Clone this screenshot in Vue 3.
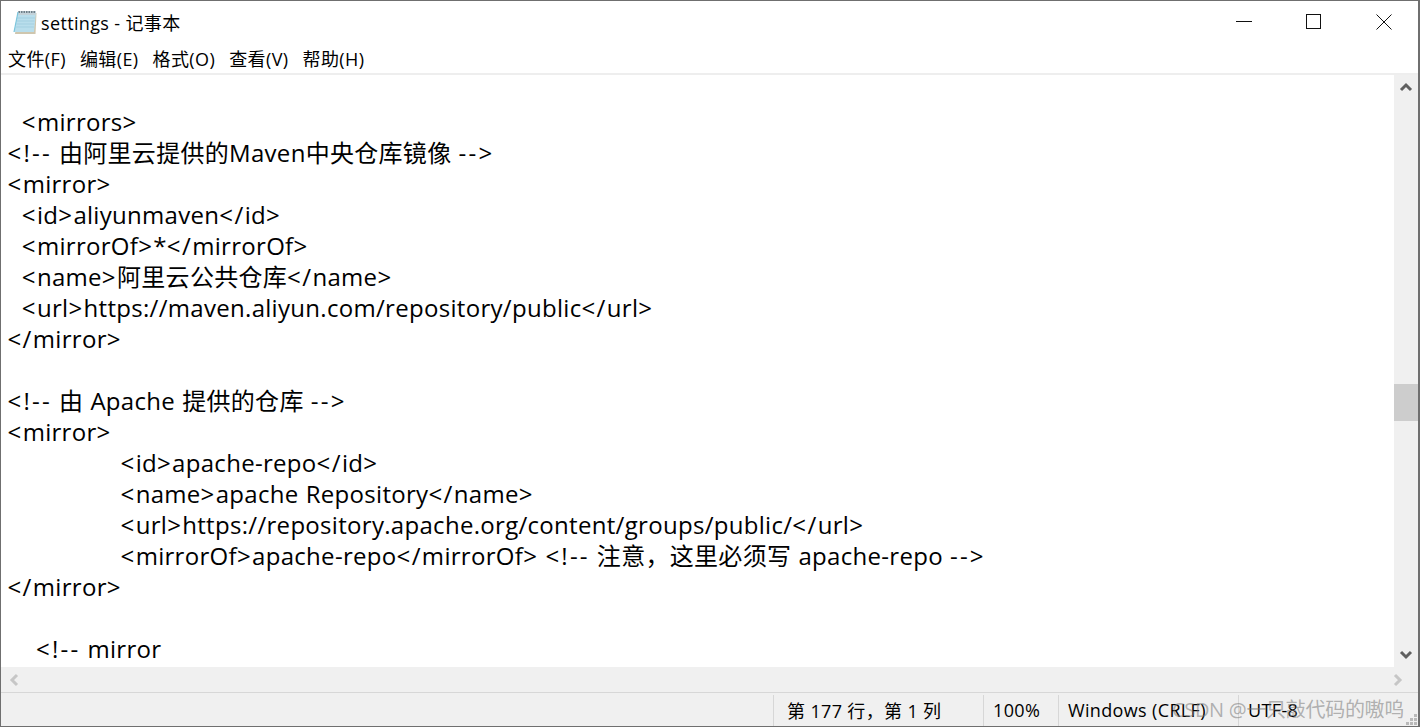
<script setup>
const menus = ['文件(F)', '编辑(E)', '格式(O)', '查看(V)', '帮助(H)']
const source = [
  '',
  '  <mirrors>',
  '<!-- 由阿里云提供的Maven中央仓库镜像 -->',
  '<mirror>',
  '  <id>aliyunmaven</id>',
  '  <mirrorOf>*</mirrorOf>',
  '  <name>阿里云公共仓库</name>',
  '  <url>https://maven.aliyun.com/repository/public</url>',
  '</mirror>',
  '',
  '<!-- 由 Apache 提供的仓库 -->',
  '<mirror>',
  '\t<id>apache-repo</id>',
  '\t<name>apache Repository</name>',
  '\t<url>https://repository.apache.org/content/groups/public/</url>',
  '\t<mirrorOf>apache-repo</mirrorOf> <!-- 注意，这里必须写 apache-repo -->',
  '</mirror>',
  '',
  '    <!-- mirror',
]
// Comment markers and angle brackets are wider in the reference's font.
const lines = source.map((l) =>
  l.split(/(<!--|-->|<\/|<|>)/).filter(Boolean).map((t) => ({
    t,
    cls: t === '<!--' || t === '-->' ? 'mark' : t === '<' || t === '>' || t === '</' ? 'angle' : '',
  }))
)
</script>

<template>
  <div class="window">
    <div class="backdrop"></div>
    <header class="titlebar">
      <svg class="app-icon" viewBox="0 0 24 24" aria-hidden="true">
        <path d="M5 3 H23.5 L22.5 24 H2 Z" fill="#cfc6ae" />
        <path d="M5 2 H23 L21 22 H1 Z" fill="#b9deec" />
        <path d="M5 1 H23 L22.6 5 H4.4 Z" fill="#c3d2d9" />
        <path d="M5.5 2 H22.5" stroke="#6f7f88" stroke-width="2" stroke-dasharray="1.5 1" fill="none" />
        <path d="M4.2 8 H21.8 M3.8 11 H21.5 M3.5 14 H21.2 M3.2 17 H20.9" stroke="#a3cfe0" stroke-width="1" fill="none" />
        <path d="M5 2 L1 22" stroke="#7cc5dc" stroke-width="1.2" fill="none" />
      </svg>
      <span class="title">settings - 记事本</span>
      <div class="controls">
        <svg class="ctl" viewBox="0 0 16 16" aria-hidden="true"><path d="M0 7.5 H16" stroke="#111" fill="none" /></svg>
        <svg class="ctl" viewBox="0 0 16 16" aria-hidden="true"><rect x="0.5" y="0.5" width="14" height="14" stroke="#111" fill="none" /></svg>
        <svg class="ctl" viewBox="0 0 16 16" aria-hidden="true"><path d="M0.5 0.5 L15.5 15.5 M15.5 0.5 L0.5 15.5" stroke="#111" fill="none" /></svg>
      </div>
    </header>
    <nav class="menubar">
      <span v-for="m in menus" :key="m" class="menu">{{ m }}</span>
    </nav>
    <main class="body">
      <div class="editor">
        <div v-for="(l, i) in lines" :key="i" class="line"><span v-for="(p, j) in l" :key="j" :class="p.cls">{{ p.t }}</span></div>
      </div>
      <aside class="vscroll">
        <svg class="arrow" viewBox="0 0 16 16" aria-hidden="true"><path d="M3 11 L8 6 L13 11" stroke="#606060" stroke-width="3" fill="none" /></svg>
        <div class="track"><div class="thumb"></div></div>
        <svg class="arrow" viewBox="0 0 16 16" aria-hidden="true"><path d="M3 5 L8 10 L13 5" stroke="#606060" stroke-width="3" fill="none" /></svg>
      </aside>
    </main>
    <div class="hscroll">
      <svg class="arrow" viewBox="0 0 16 16" aria-hidden="true"><path d="M11 3 L6 8 L11 13" stroke="#c6c6c6" stroke-width="3" fill="none" /></svg>
      <svg class="arrow" viewBox="0 0 16 16" aria-hidden="true"><path d="M5 3 L10 8 L5 13" stroke="#c6c6c6" stroke-width="3" fill="none" /></svg>
    </div>
    <footer class="status">
      <span class="cell pos">第 177 行，第 1 列</span>
      <span class="cell zoom">100%</span>
      <span class="cell eol">Windows (CRLF)</span>
      <span class="cell enc">UTF-8</span>
      <span class="watermark">CSDN @一只敲代码的嗷呜</span>
      <svg class="grip" viewBox="0 0 12 12" aria-hidden="true">
        <path d="M8 0 h3 v3 h-3 Z M4 4 h3 v3 h-3 Z M8 4 h3 v3 h-3 Z M0 8 h3 v3 h-3 Z M4 8 h3 v3 h-3 Z M8 8 h3 v3 h-3 Z" fill="#b9b9b9" />
      </svg>
    </footer>
  </div>
</template>

<style>
html, body { margin: 0; background: #fff; overflow: hidden; }
</style>

<style scoped>
.window {
  width: 1420px;
  height: 727px;
  box-sizing: border-box;
  border: 1px solid #6f6f6f;
  border-right-width: 2px;
  background: #fff;
  display: flex;
  flex-direction: column;
  overflow: hidden;
  position: relative;
  font-family: "Open Sans", "Noto Sans CJK SC", sans-serif;
  color: #000;
}
.backdrop {
  position: absolute;
  left: 1345px;
  top: -1px;
  width: 65px;
  height: 1px;
  background: #8a4a38;
}
.titlebar {
  height: 41px;
  flex: none;
  display: flex;
  align-items: center;
  padding-left: 12px;
}
.app-icon { width: 24px; height: 24px; flex: none; }
.title { margin-left: 4px; font-size: 18px; letter-spacing: 0.35px; }
.controls { margin-left: auto; display: flex; align-items: center; gap: 54px; margin-right: 26px; }
.ctl { width: 16px; height: 16px; display: block; }
.menubar {
  height: 31px;
  flex: none;
  display: flex;
  align-items: center;
  gap: 14px;
  padding-left: 7px;
  font-size: 18px;
  letter-spacing: 0.4px;
}
.body {
  flex: 1;
  min-height: 0;
  display: flex;
  border-top: 2px solid #eeeeee;
}
.editor {
  flex: 1;
  min-width: 0;
  overflow: hidden;
  padding-left: 6.5px;
  font-size: 24px;
  letter-spacing: 0.3px;
  word-spacing: 0.6px;
  tab-size: 113px;
}
.line { height: 31px; line-height: 31px; white-space: pre; }
.mark { letter-spacing: 2.2px; }
.angle { letter-spacing: 1.4px; }
.vscroll {
  width: 24px;
  flex: none;
  background: #f0f0f0;
  display: flex;
  flex-direction: column;
  align-items: center;
}
.arrow { width: 16px; height: 16px; flex: none; margin: 4px 0; }
.track { flex: 1; width: 100%; }
.thumb { margin-top: 285px; height: 37px; background: #cdcdcd; }
.hscroll {
  height: 26px;
  flex: none;
  background: #f0f0f0;
  display: flex;
  align-items: center;
  justify-content: space-between;
  padding: 0 12px 0 5px;
  border-bottom: 1px solid #d7d7d7;
  box-sizing: border-box;
}
.status {
  height: 33px;
  flex: none;
  background: #f0f0f0;
  display: flex;
  justify-content: flex-end;
  align-items: stretch;
  font-size: 18px;
  letter-spacing: 0.35px;
  position: relative;
}
.cell {
  display: flex;
  align-items: center;
  box-sizing: border-box;
  border-left: 1px solid #d7d7d7;
  margin: 2px 0 0;
  padding-bottom: 2px;
  padding-left: 10px;
  white-space: pre;
  flex: none;
}
.pos { width: 210px; padding-left: 13px; }
.zoom { width: 75px; padding-left: 9px; }
.eol { width: 180px; padding-left: 9px; }
.enc { width: 180px; padding-left: 9px; }
.watermark {
  position: absolute;
  right: 14px;
  top: 1px;
  font-size: 20px;
  letter-spacing: -0.3px;
  color: rgba(120, 120, 120, 0.55);
  white-space: nowrap;
}
.grip {
  position: absolute;
  right: 0;
  bottom: 0;
  width: 12px;
  height: 12px;
}
</style>
